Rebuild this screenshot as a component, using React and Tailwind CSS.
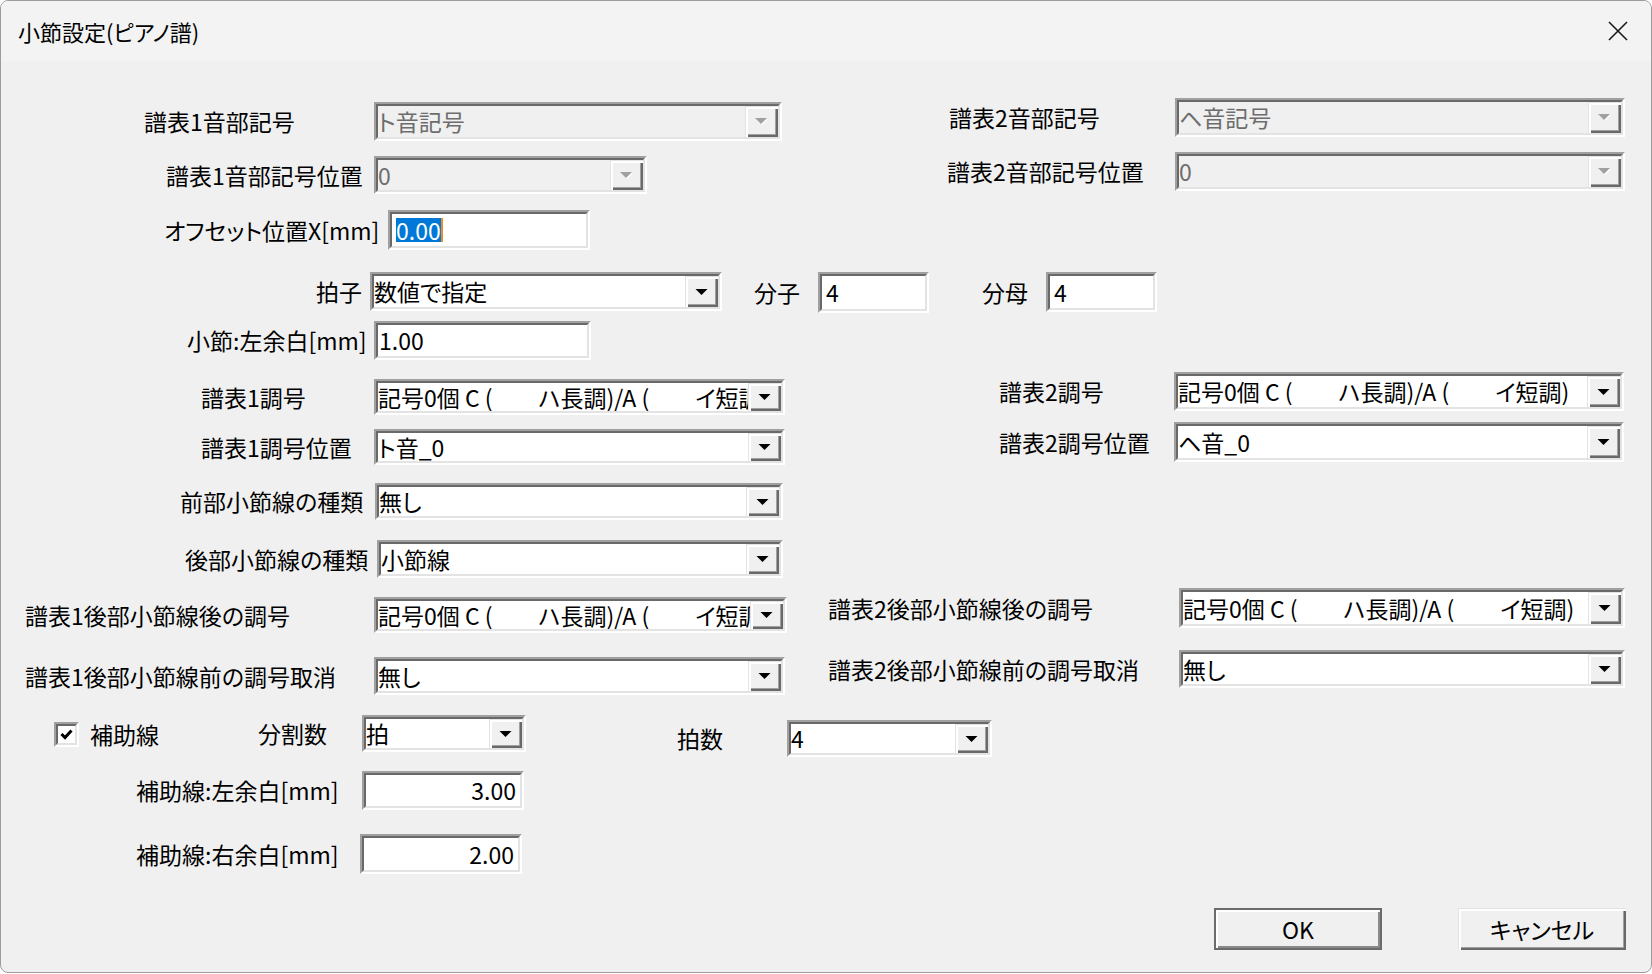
import React from 'react'

const JP = "font-['Noto_Sans_CJK_JP','Noto_Sans',sans-serif] [font-feature-settings:'palt']"
const KEY_SIG = '記号0個 C (　　ハ長調)/A (　　イ短調)'

const RAISED =
  'shadow-[inset_1px_1px_0_#e3e3e3,inset_3px_3px_0_#ffffff,inset_-2px_-2px_0_#696969,inset_-3px_-3px_0_#a0a0a0]'

function DropArrow({ disabled }) {
  if (disabled) {
    return (
      <svg width="15" height="9" viewBox="0 0 15 9">
        <polygon points="2,2 14,2 8,8" fill="#ffffff" />
        <polygon points="1,1 13,1 7,7" fill="#a0a0a0" />
      </svg>
    )
  }
  return (
    <svg width="13" height="8" viewBox="0 0 13 8">
      <polygon points="0.5,1 12.5,1 6.5,7" fill="#000000" />
    </svg>
  )
}

// classic two-step sunken frame used by edits, combos and the checkbox
function Sunken({ className = '', inner = '', children }) {
  return (
    <div className={`shrink-0 border-2 border-t-[#a0a0a0] border-l-[#a0a0a0] border-b-white border-r-white ${className}`}>
      <div className={`h-full border-2 border-t-[#696969] border-l-[#696969] border-b-[#e3e3e3] border-r-[#e3e3e3] ${inner}`}>
        {children}
      </div>
    </div>
  )
}

// clip: long entries are cut at the drop button, as the native control does
function Combo({ size, value, disabled = false, clip = false }) {
  return (
    <Sunken className={size} inner={`flex ${disabled ? 'bg-[#f0f0f0]' : 'bg-white'}`}>
      <div
        className={`flex min-w-0 flex-1 items-center whitespace-nowrap text-[23px] leading-none ${
          clip ? 'overflow-hidden' : ''
        } ${disabled ? 'text-[#6d6d6d]' : 'text-black'}`}
      >
        {value}
      </div>
      <div className={`flex w-[33px] shrink-0 items-center justify-center bg-[#f0f0f0] ${RAISED}`}>
        <DropArrow disabled={disabled} />
      </div>
    </Sunken>
  )
}

function Edit({ size, children, align = 'justify-start', pad = 'px-[1px]' }) {
  return (
    <Sunken className={size} inner={`flex items-center bg-white text-[23px] leading-none ${align} ${pad}`}>
      {children}
    </Sunken>
  )
}

function Group({ className = '', labelWidth, label, children }) {
  return (
    <div className={`flex shrink-0 items-center ${className}`}>
      <div className={`${labelWidth} shrink-0 whitespace-nowrap text-[23px] leading-none`}>{label}</div>
      {children}
    </div>
  )
}

function Row({ className = '', children }) {
  return <div className={`flex shrink-0 items-start ${className}`}>{children}</div>
}

export default function App() {
  return (
    <div className={`h-[974px] w-[1652px] bg-white text-black ${JP}`}>
      <div className="flex h-[973px] w-[1652px] flex-col overflow-hidden rounded-[8px] border border-[#9c9c9c] bg-[#f0f0f0]">
        {/* title bar */}
        <div className="flex h-[60px] shrink-0 items-center bg-[#f3f3f3] pl-[17px] pr-[23px]">
          <span className="text-[22px] leading-none">小節設定(ピアノ譜)</span>
          <svg className="ml-auto" width="20" height="20" viewBox="0 0 20 20">
            <path d="M1 1 L19 19 M19 1 L1 19" stroke="#1a1a1a" strokeWidth="1.6" fill="none" />
          </svg>
        </div>

        <div className="flex flex-col pt-[37px]">
          <Row className="h-[54px]">
            <Group className="ml-[143px] mt-[4px]" labelWidth="w-[230px]" label="譜表1音部記号">
              <Combo size="w-[408px] h-[39px]" value="ト音記号" disabled />
            </Group>
            <Group className="ml-[167px]" labelWidth="w-[226px]" label="譜表2音部記号">
              <Combo size="w-[450px] h-[39px]" value="ヘ音記号" disabled />
            </Group>
          </Row>

          <Row className="h-[58px]">
            <Group className="ml-[165px] mt-[4px]" labelWidth="w-[208px]" label="譜表1音部記号位置">
              <Combo size="w-[273px] h-[38px]" value="0" disabled />
            </Group>
            <Group className="ml-[300px]" labelWidth="w-[228px]" label="譜表2音部記号位置">
              <Combo size="w-[450px] h-[39px]" value="0" disabled />
            </Group>
          </Row>

          <Row className="h-[62px]">
            <Group className="ml-[163px]" labelWidth="w-[224px]" label="オフセット位置X[mm]">
              <Edit size="w-[202px] h-[40px]" pad="px-[4px]">
                <span className="inline-block h-[24px] bg-[#0078d7] leading-[24px] text-white">0.00</span>
                <span className="inline-block h-[24px] w-[2px] bg-[#f08a24]" />
              </Edit>
            </Group>
          </Row>

          <Row className="h-[49px]">
            <Group className="ml-[315px]" labelWidth="w-[54px]" label="拍子">
              <Combo size="w-[352px] h-[39px]" value="数値で指定" />
            </Group>
            <Group className="ml-[32px]" labelWidth="w-[64px]" label="分子">
              <Edit size="w-[111px] h-[41px]" pad="px-[4px]">4</Edit>
            </Group>
            <Group className="ml-[53px]" labelWidth="w-[64px]" label="分母">
              <Edit size="w-[111px] h-[40px]" pad="px-[4px]">4</Edit>
            </Group>
          </Row>

          <Row className="h-[51px]">
            <Group className="ml-[186px]" labelWidth="w-[187px]" label="小節:左余白[mm]">
              <Edit size="w-[217px] h-[39px]">1.00</Edit>
            </Group>
          </Row>

          <Row className="h-[50px]">
            <Group className="ml-[200px] mt-[7px]" labelWidth="w-[173px]" label="譜表1調号">
              <Combo size="w-[411px] h-[36px]" value={KEY_SIG} clip />
            </Group>
            <Group className="ml-[214px]" labelWidth="w-[175px]" label="譜表2調号">
              <Combo size="w-[450px] h-[39px]" value={KEY_SIG} clip />
            </Group>
          </Row>

          <Row className="h-[61px]">
            <Group className="ml-[200px] mt-[7px]" labelWidth="w-[173px]" label="譜表1調号位置">
              <Combo size="w-[411px] h-[36px]" value="ト音_0" />
            </Group>
            <Group className="ml-[214px]" labelWidth="w-[175px]" label="譜表2調号位置">
              <Combo size="w-[450px] h-[40px]" value="ヘ音_0" />
            </Group>
          </Row>

          <Row className="h-[57px]">
            <Group className="ml-[179px]" labelWidth="w-[195px]" label="前部小節線の種類">
              <Combo size="w-[408px] h-[37px]" value="無し" />
            </Group>
          </Row>

          <Row className="h-[48px]">
            <Group className="ml-[184px]" labelWidth="w-[192px]" label="後部小節線の種類">
              <Combo size="w-[406px] h-[38px]" value="小節線" />
            </Group>
          </Row>

          <Row className="h-[62px]">
            <Group className="ml-[24px] mt-[9px]" labelWidth="w-[349px]" label="譜表1後部小節線後の調号">
              <Combo size="w-[413px] h-[36px]" value={KEY_SIG} clip />
            </Group>
            <Group className="ml-[41px]" labelWidth="w-[351px]" label="譜表2後部小節線後の調号">
              <Combo size="w-[446px] h-[40px]" value={KEY_SIG} clip />
            </Group>
          </Row>

          <Row className="h-[67px]">
            <Group className="ml-[24px] mt-[7px]" labelWidth="w-[349px]" label="譜表1後部小節線前の調号取消">
              <Combo size="w-[411px] h-[38px]" value="無し" />
            </Group>
            <Group className="ml-[43px]" labelWidth="w-[351px]" label="譜表2後部小節線前の調号取消">
              <Combo size="w-[446px] h-[38px]" value="無し" />
            </Group>
          </Row>

          <Row className="h-[54px]">
            <div className="ml-[53px] mt-[5px] flex h-[25px] shrink-0 items-center">
              <Sunken className="h-[25px] w-[25px]" inner="flex items-center justify-center bg-white">
                <svg width="13" height="11" viewBox="0 0 13 11">
                  <path d="M1.5 5 L5 8.5 L11.5 1.5" stroke="#000" strokeWidth="3" fill="none" />
                </svg>
              </Sunken>
              <span className="ml-[11px] w-[168px] whitespace-nowrap text-[23px] leading-none">補助線</span>
            </div>
            <Group className="-mt-[2px]" labelWidth="w-[104px]" label="分割数">
              <Combo size="w-[164px] h-[37px]" value="拍" />
            </Group>
            <Group className="ml-[151px] mt-[3px]" labelWidth="w-[110px]" label="拍数">
              <Combo size="w-[205px] h-[37px]" value="4" />
            </Group>
          </Row>

          <Row className="h-[63px]">
            <Group className="ml-[135px]" labelWidth="w-[226px]" label="補助線:左余白[mm]">
              <Edit size="w-[162px] h-[39px]" align="justify-end" pad="px-[4px]">3.00</Edit>
            </Group>
          </Row>

          <Row className="h-[74px]">
            <Group className="ml-[135px]" labelWidth="w-[224px]" label="補助線:右余白[mm]">
              <Edit size="w-[162px] h-[40px]" align="justify-end" pad="px-[4px]">2.00</Edit>
            </Group>
          </Row>

          <Row>
            <button
              type="button"
              className="ml-[1213px] flex h-[42px] w-[168px] shrink-0 items-center justify-center border-2 border-[#6b6b6b] bg-[#f0f0f0] text-[23px] leading-none shadow-[inset_2px_2px_0_#ffffff,inset_-2px_-2px_0_#8a8a8a]"
            >
              OK
            </button>
            <button
              type="button"
              className={`ml-[76px] flex h-[42px] w-[168px] shrink-0 items-center justify-center bg-[#f0f0f0] text-[23px] leading-none ${RAISED}`}
            >
              キャンセル
            </button>
          </Row>
        </div>
      </div>
    </div>
  )
}
